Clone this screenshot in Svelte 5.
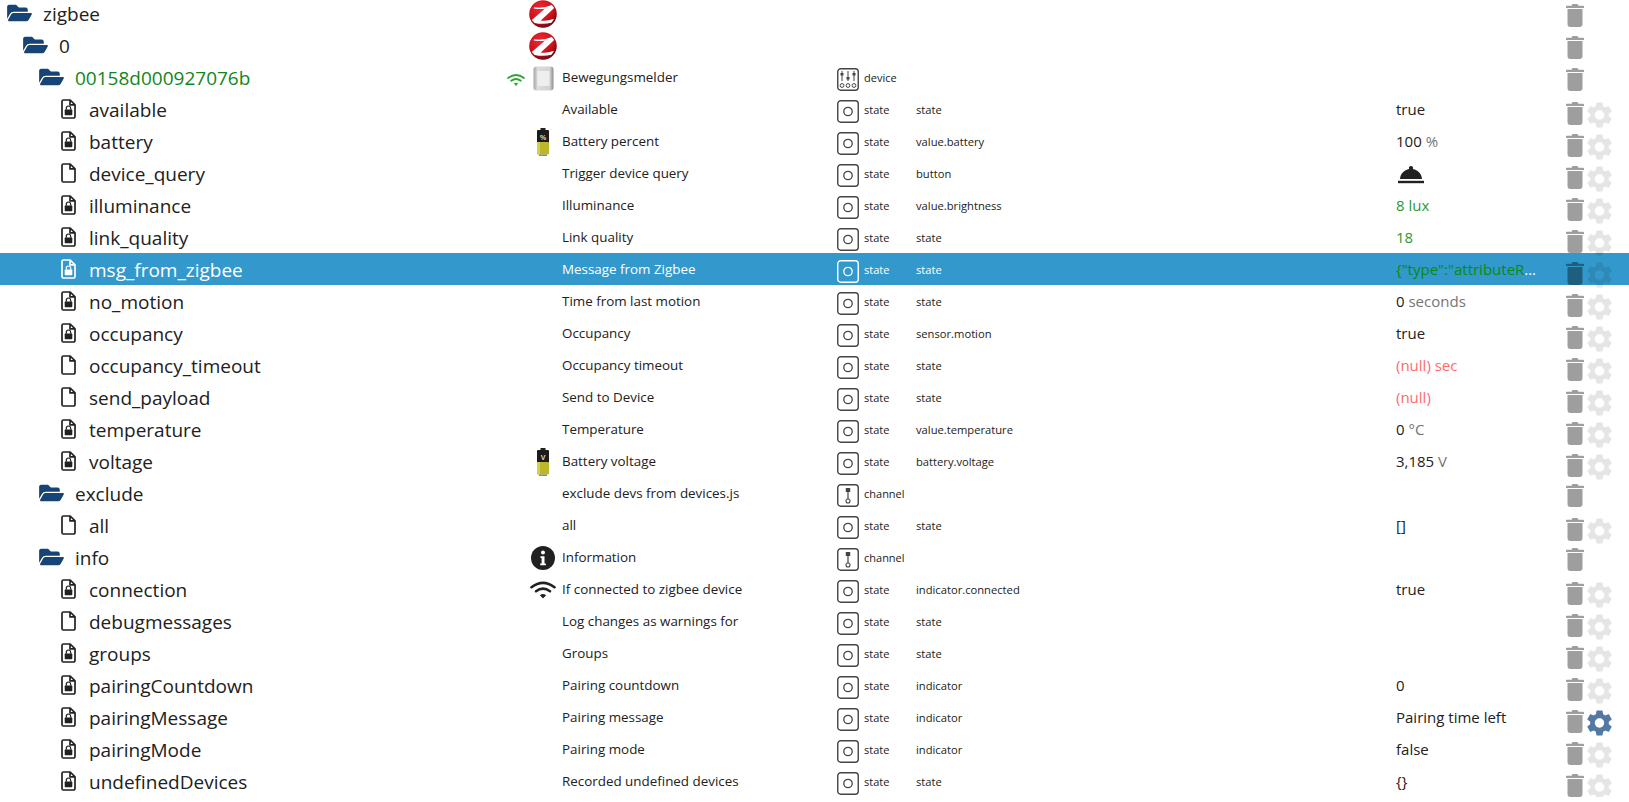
<script>
  // one row per object, lvl 0-2 are folders, leaf = file with lock or not
  const FOLDER = 'folder';
  const rows = [
    { name: 'zigbee', kind: FOLDER, lvl: 0, icon: 'zigbee' },
    { name: '0', kind: FOLDER, lvl: 1, icon: 'zigbee' },
    { name: '00158d000927076b', kind: FOLDER, lvl: 2, green: true, icon: 'sensor', wifi: true, label: 'Bewegungsmelder', type: 'device' },
    { name: 'available', kind: 'lock', label: 'Available', type: 'state', role: 'state', val: 'true' },
    { name: 'battery', kind: 'lock', icon: 'battery', batt: '%', label: 'Battery percent', type: 'state', role: 'value.battery', val: '100', unit: '%' },
    { name: 'device_query', kind: 'file', label: 'Trigger device query', type: 'state', role: 'button', bell: true },
    { name: 'illuminance', kind: 'lock', label: 'Illuminance', type: 'state', role: 'value.brightness', val: '8', unit: 'lux', cls: 'ack' },
    { name: 'link_quality', kind: 'lock', label: 'Link quality', type: 'state', role: 'state', val: '18', cls: 'ack' },
    { name: 'msg_from_zigbee', kind: 'lock', label: 'Message from Zigbee', type: 'state', role: 'state', val: '{"type":"attributeReport","data":{}}', cls: 'ack2', selected: true },
    { name: 'no_motion', kind: 'lock', label: 'Time from last motion', type: 'state', role: 'state', val: '0', unit: 'seconds' },
    { name: 'occupancy', kind: 'lock', label: 'Occupancy', type: 'state', role: 'sensor.motion', val: 'true' },
    { name: 'occupancy_timeout', kind: 'file', label: 'Occupancy timeout', type: 'state', role: 'state', val: '(null)', unit: 'sec', cls: 'nul' },
    { name: 'send_payload', kind: 'file', label: 'Send to Device', type: 'state', role: 'state', val: '(null)', cls: 'nul' },
    { name: 'temperature', kind: 'lock', label: 'Temperature', type: 'state', role: 'value.temperature', val: '0', unit: '°C' },
    { name: 'voltage', kind: 'lock', icon: 'battery', batt: 'V', label: 'Battery voltage', type: 'state', role: 'battery.voltage', val: '3,185', unit: 'V' },
    { name: 'exclude', kind: FOLDER, lvl: 2, label: 'exclude devs from devices.js', type: 'channel' },
    { name: 'all', kind: 'file', label: 'all', type: 'state', role: 'state', val: '[]' },
    { name: 'info', kind: FOLDER, lvl: 2, icon: 'info', label: 'Information', type: 'channel' },
    { name: 'connection', kind: 'lock', icon: 'wifi', label: 'If connected to zigbee device', type: 'state', role: 'indicator.connected', val: 'true' },
    { name: 'debugmessages', kind: 'file', label: 'Log changes as warnings for', type: 'state', role: 'state' },
    { name: 'groups', kind: 'lock', label: 'Groups', type: 'state', role: 'state' },
    { name: 'pairingCountdown', kind: 'lock', label: 'Pairing countdown', type: 'state', role: 'indicator', val: '0' },
    { name: 'pairingMessage', kind: 'lock', label: 'Pairing message', type: 'state', role: 'indicator', val: 'Pairing time left', custom: true },
    { name: 'pairingMode', kind: 'lock', label: 'Pairing mode', type: 'state', role: 'indicator', val: 'false' },
    { name: 'undefinedDevices', kind: 'lock', label: 'Recorded undefined devices', type: 'state', role: 'state', val: '{}' }
  ];

  const folderPath = 'M572.694 292.093L500.27 416.248A63.997 63.997 0 0 1 444.989 448H45.025c-18.523 0-30.064-20.093-20.731-36.093l72.424-124.155A64 64 0 0 1 152 256h399.964c18.523 0 30.064 20.093 20.73 36.093zM152 224h328v-48c0-26.51-21.49-48-48-48H272l-64-64H48C21.49 64 0 85.49 0 112v278.046l69.077-118.418C86.214 242.25 117.989 224 152 224z';
  const gearPath = 'M19.14 12.94c.04-.3.06-.61.06-.94 0-.32-.02-.64-.07-.94l2.03-1.58c.18-.14.23-.41.12-.61l-1.92-3.32c-.12-.22-.37-.29-.59-.22l-2.39.96c-.5-.38-1.03-.7-1.62-.94l-.36-2.54c-.04-.24-.24-.41-.48-.41h-3.84c-.24 0-.43.17-.47.41l-.36 2.54c-.59.24-1.13.57-1.62.94l-2.39-.96c-.22-.08-.47 0-.59.22L2.74 8.87c-.12.21-.08.47.12.61l2.03 1.58c-.05.3-.09.63-.09.94s.02.64.07.94l-2.03 1.58c-.18.14-.23.41-.12.61l1.92 3.32c.12.22.37.29.59.22l2.39-.96c.5.38 1.03.7 1.62.94l.36 2.54c.05.24.24.41.48.41h3.84c.24 0 .44-.17.47-.41l.36-2.54c.59-.24 1.13-.56 1.62-.94l2.39.96c.22.08.47 0 .59-.22l1.92-3.32c.12-.22.07-.47-.12-.61l-2.01-1.58zM12 15.6c-1.98 0-3.6-1.62-3.6-3.6s1.62-3.6 3.6-3.6 3.6 1.62 3.6 3.6-1.62 3.6-3.6 3.6z';
</script>

{#snippet zigbeeLogo(id)}
  <svg class="logo" width="28" height="28" viewBox="0 0 28 28">
    <defs>
      <radialGradient id={id} cx="42%" cy="30%" r="75%">
        <stop offset="0" stop-color="#ee2a32" />
        <stop offset="0.6" stop-color="#cf111b" />
        <stop offset="1" stop-color="#5e060b" />
      </radialGradient>
    </defs>
    <circle cx="14" cy="14" r="13.8" fill="url(#{id})" />
    <path d="M5 7.200Q14 8.800 22.800 5L25.200 8 11.800 20.400Q18 21.300 24.800 18.800Q24 21 22.400 22.800Q14 24.800 5.600 23L2.800 20 15.800 8.800Q10.500 9.400 4.600 8.400Z" fill="#fff" />
  </svg>
{/snippet}

{#snippet sensorIcon()}
  <svg class="sensor" width="21" height="25" viewBox="0 0 21 25">
    <defs>
      <linearGradient id="sbody" x1="0" x2="1" y1="0" y2="0">
        <stop offset="0" stop-color="#a3a3a3" />
        <stop offset="0.2" stop-color="#dcdcdc" />
        <stop offset="0.82" stop-color="#d2d2d2" />
        <stop offset="1" stop-color="#8c8c8c" />
      </linearGradient>
    </defs>
    <rect x="0.5" y="0.5" width="20" height="24" rx="3" fill="url(#sbody)" />
    <rect x="4.5" y="5" width="12" height="15" rx="1" fill="#eeeeee" />
  </svg>
{/snippet}

{#snippet batteryIcon(mark)}
  <svg class="battery" width="14" height="28" viewBox="0 0 14 28">
    <rect x="4.5" y="0" width="5" height="3" fill="#222" />
    <rect x="1" y="2" width="12" height="13" rx="1" fill="#1c1c1c" />
    <rect x="1" y="14" width="12" height="12.5" rx="1" fill="#b9b72a" />
    <rect x="1" y="14" width="3" height="12.5" fill="#d2d04e" />
    <rect x="3" y="26.5" width="8" height="1.5" fill="#888" />
    <text x="7" y="11.5" text-anchor="middle" class="batt-mark">{mark}</text>
  </svg>
{/snippet}

{#snippet infoIcon()}
  <svg width="24" height="24" viewBox="0 0 24 24">
    <circle cx="12" cy="12" r="12" fill="#212121" />
    <circle cx="12" cy="6.6" r="2" fill="#fff" />
    <path d="M9.5 10.2h4v7.2h1.4v1.8H9.2v-1.8h1.4v-5.4H9.5z" fill="#fff" />
  </svg>
{/snippet}

{#snippet wifiIcon(w, h, color)}
  <svg class="wifi" width={w} height={h} viewBox="0 0 26 18" fill="none" stroke={color} stroke-width="2.6" stroke-linecap="round">
    <path d="M1.5 6.2Q13-2.6 24.500 6.200" />
    <path d="M6 10.200Q13 5 20 10.200" />
    <path d="M13 17.600L9.900 14.200Q13 11.800 16.100 14.200Z" fill={color} stroke="none" />
  </svg>
{/snippet}

{#snippet fileIcon(locked)}
  <svg class="file" width="15" height="20" viewBox="0 0 15 20">
    <path d="M2.500 1h6.700L14 5.800V17.500a1.500 1.500 0 0 1-1.500 1.500H2.500A1.500 1.500 0 0 1 1 17.500V2.500A1.500 1.500 0 0 1 2.500 1zM9 1v4.900h5" fill="none" stroke="currentColor" stroke-width="1.700" stroke-linejoin="round" />
    {#if locked}
      <rect x="3.700" y="10.500" width="7.600" height="5.800" rx="0.800" fill="currentColor" />
      <path d="M5.300 10.800V9.200a2.200 2.200 0 0 1 4.400 0v1.600" fill="none" stroke="currentColor" stroke-width="1.200" />
    {/if}
  </svg>
{/snippet}

{#snippet typeIcon(type)}
  <svg class="type-icon" width="22" height="23" viewBox="0 0 22 23" fill="none" stroke="currentColor">
    <rect x="0.750" y="0.750" width="20.500" height="21.500" rx="3" stroke-width="1.400" />
    {#if type === 'state'}
      <circle cx="11" cy="11.500" r="4.200" stroke-width="1.300" />
    {:else if type === 'channel'}
      <path d="M11 7v8" stroke-width="1.200" />
      <rect x="8.800" y="4" width="4.400" height="4" fill="currentColor" stroke="none" />
      <circle cx="11" cy="17" r="2" stroke-width="1.100" />
    {:else}
      <path d="M5 3v10M11 3v10M17 3v10" stroke-width="1" />
      <rect x="3.500" y="5" width="3" height="2.500" fill="currentColor" stroke="none" />
      <rect x="9.500" y="9" width="3" height="2.500" fill="currentColor" stroke="none" />
      <rect x="15.500" y="5" width="3" height="2.500" fill="currentColor" stroke="none" />
      <circle cx="5" cy="17.500" r="1.900" stroke-width="1" />
      <circle cx="11" cy="17.500" r="1.900" stroke-width="1" />
      <circle cx="17" cy="17.500" r="1.900" stroke-width="1" />
    {/if}
  </svg>
{/snippet}

{#snippet bellIcon()}
  <svg class="bell" width="26" height="18" viewBox="0 0 26 18">
    <path d="M13 0c1.300 0 2.100 .8 2.100 2 0 .5-.1.800-.3 1.100C20 4 23.600 8 24 13H2C2.400 8 6 4 11.200 3.100 11 2.800 10.900 2.500 10.900 2 10.900.8 11.700 0 13 0z" fill="#212121" />
    <rect x="0" y="14.800" width="26" height="2.400" fill="#212121" />
  </svg>
{/snippet}

<div class="tree">
  {#each rows as r, i}
    <div class="row" class:selected={r.selected} class:folder-row={r.kind === FOLDER}>
      <div class="name" class:green={r.green} style={r.kind === FOLDER ? `padding-left:${7 + r.lvl * 16}px` : ''}>
        {#if r.kind === FOLDER}
          <svg class="folder" width="25" height="22" viewBox="0 0 576 512"><path d={folderPath} /></svg>
        {:else}
          {@render fileIcon(r.kind === 'lock')}
        {/if}
        <span>{r.name}</span>
      </div>
      <div class="status">
        {#if r.wifi}{@render wifiIcon(18, 14, '#2fa536')}{/if}
      </div>
      <div class="icon">
        {#if r.icon === 'zigbee'}
          {@render zigbeeLogo('zgrad' + i)}
        {:else if r.icon === 'sensor'}
          {@render sensorIcon()}
        {:else if r.icon === 'battery'}
          {@render batteryIcon(r.batt)}
        {:else if r.icon === 'info'}
          {@render infoIcon()}
        {:else if r.icon === 'wifi'}
          {@render wifiIcon(26, 18, '#212121')}
        {/if}
      </div>
      <div class="label">{r.label ?? ''}</div>
      <div class="type">
        {#if r.type}
          {@render typeIcon(r.type)}
          <span>{r.type}</span>
        {/if}
      </div>
      <div class="role">{r.role ?? ''}</div>
      <div class="value {r.cls ?? ''}">
        {#if r.bell}
          {@render bellIcon()}
        {:else if r.val}
          <span class="val">{r.val}</span>{#if r.unit}<span class="unit">{' ' + r.unit}</span>{/if}
        {/if}
      </div>
      <div class="actions">
        <svg class="trash" width="18" height="23" viewBox="0 0 18 23">
          <path d="M6.500 0h5l1 1.800h-7zM.8 1.800h16.400a.8.8 0 0 1 .8.800v1.400H0V2.600a.8.8 0 0 1 .8-.8zM1.500 5h15v15a3 3 0 0 1-3 3h-9a3 3 0 0 1-3-3z" />
        </svg>
        {#if r.kind !== FOLDER}
          <svg class="gear" class:custom={r.custom} width="25" height="26" viewBox="2.500 2 19 20"><path d={gearPath} /></svg>
        {/if}
      </div>
    </div>
  {/each}
</div>

<style>
  :global(body) {
    margin: 0;
    background: #fff;
    overflow: hidden;
  }
  .tree {
    margin-top: -3px;
    font-family: "Open Sans", "Noto Sans", sans-serif;
    color: #212121;
  }
  .row {
    display: grid;
    grid-template-columns: 506px 20px 34px 277px 79px 480px 170px 63px;
    height: 32px;
    align-items: center;
    white-space: nowrap;
  }
  .row.selected {
    background: #3399cc;
    color: #fff;
  }
  .name {
    display: flex;
    align-items: center;
    padding-left: 61px;
    font-size: 19px;
    height: 32px;
    box-sizing: border-box;
  }
  .name span {
    margin-top: 2px;
  }
  .name .file {
    margin-right: 13px;
    flex: none;
  }
  .folder-row .name {
    gap: 11px;
  }
  .folder {
    fill: #164477;
    flex: none;
  }
  .green {
    color: #11861c;
  }
  .status,
  .icon {
    display: flex;
    justify-content: center;
    align-items: center;
    height: 32px;
  }
  .icon svg {
    display: block;
    margin-top: 2px;
  }
  .status .wifi {
    margin-top: 5px;
  }
  .batt-mark {
    font: bold 7px "Liberation Sans", sans-serif;
    fill: #ddd;
  }
  .label {
    font-size: 13.4px;
    padding-left: 2px;
  }
  .type {
    display: flex;
    align-items: center;
    gap: 5px;
    font-size: 11px;
    height: 32px;
  }
  .type-icon {
    margin-top: 4px;
    color: #444;
    flex: none;
  }
  .selected .type-icon {
    color: #fff;
  }
  .role {
    font-size: 11.2px;
  }
  .value {
    font-size: 15px;
    width: 140px;
    overflow: hidden;
    text-overflow: ellipsis;
  }
  .unit {
    color: #757575;
  }
  .ack .val,
  .ack .unit {
    color: #2a9a32;
  }
  .ack2 .val {
    color: #088a12;
  }
  .nul .val,
  .nul .unit {
    color: #ff6b6b;
  }
  .bell {
    display: block;
    margin: 4px 0 0 2px;
  }
  .actions {
    display: flex;
    align-items: flex-start;
    gap: 3px;
    height: 32px;
    padding-top: 9px;
    box-sizing: border-box;
  }
  .trash {
    fill: rgba(0, 0, 0, 0.38);
    flex: none;
  }
  .gear {
    fill: rgba(0, 0, 0, 0.1);
    flex: none;
  }
  .gear.custom {
    fill: #5378a3;
  }
  .folder-row .actions {
    padding-top: 7px;
  }
</style>
